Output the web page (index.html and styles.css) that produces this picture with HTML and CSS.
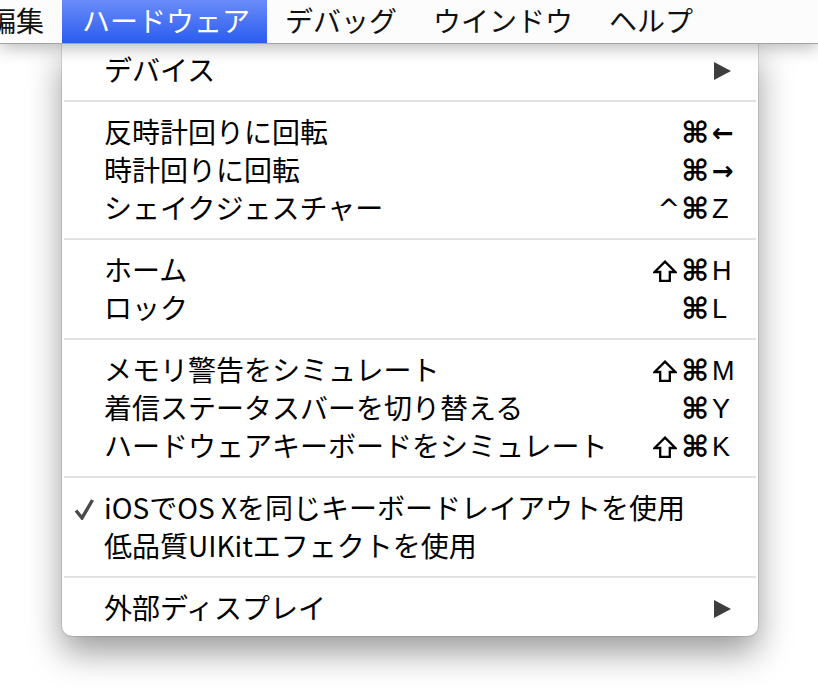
FILE: index.html
```html
<!DOCTYPE html>
<html lang="ja">
<head>
<meta charset="utf-8">
<title>ハードウェア</title>
<link rel="stylesheet" href="styles.css">
</head>
<body>
<div class="screen">
  <nav class="menubar">
    <span class="mb-item mb-first">編集</span>
    <span class="mb-item active">ハードウェア</span>
    <span class="mb-item">デバッグ</span>
    <span class="mb-item">ウインドウ</span>
    <span class="mb-item">ヘルプ</span>
  </nav>
  <div class="menu">
    <div class="mi"><span class="check"></span><span class="label">デバイス</span><span class="mods"></span><span class="key"><span class="tri"></span></span></div>
    <div class="sep"></div>
    <div class="mi"><span class="check"></span><span class="label">反時計回りに回転</span><span class="mods"><span class="cmd">⌘</span></span><span class="key arrow">←</span></div>
    <div class="mi"><span class="check"></span><span class="label">時計回りに回転</span><span class="mods"><span class="cmd">⌘</span></span><span class="key arrow">→</span></div>
    <div class="mi"><span class="check"></span><span class="label">シェイクジェスチャー</span><span class="mods"><span class="ctrl">^</span><span class="cmd">⌘</span></span><span class="key">Z</span></div>
    <div class="sep"></div>
    <div class="mi"><span class="check"></span><span class="label">ホーム</span><span class="mods"><svg class="shift" viewBox="0 0 24 22" width="24" height="22"><path d="M12 1.6 L22.4 12 L16.8 12 L16.8 20.8 L7.2 20.8 L7.2 12 L1.6 12 Z" fill="none" stroke="#000" stroke-width="2.3" stroke-linejoin="miter"/></svg><span class="cmd">⌘</span></span><span class="key">H</span></div>
    <div class="mi"><span class="check"></span><span class="label">ロック</span><span class="mods"><span class="cmd">⌘</span></span><span class="key">L</span></div>
    <div class="sep"></div>
    <div class="mi"><span class="check"></span><span class="label">メモリ警告をシミュレート</span><span class="mods"><svg class="shift" viewBox="0 0 24 22" width="24" height="22"><path d="M12 1.6 L22.4 12 L16.8 12 L16.8 20.8 L7.2 20.8 L7.2 12 L1.6 12 Z" fill="none" stroke="#000" stroke-width="2.3" stroke-linejoin="miter"/></svg><span class="cmd">⌘</span></span><span class="key">M</span></div>
    <div class="mi"><span class="check"></span><span class="label">着信ステータスバーを切り替える</span><span class="mods"><span class="cmd">⌘</span></span><span class="key">Y</span></div>
    <div class="mi"><span class="check"></span><span class="label">ハードウェアキーボードをシミュレート</span><span class="mods"><svg class="shift" viewBox="0 0 24 22" width="24" height="22"><path d="M12 1.6 L22.4 12 L16.8 12 L16.8 20.8 L7.2 20.8 L7.2 12 L1.6 12 Z" fill="none" stroke="#000" stroke-width="2.3" stroke-linejoin="miter"/></svg><span class="cmd">⌘</span></span><span class="key">K</span></div>
    <div class="sep"></div>
    <div class="mi"><span class="check"><svg class="checkmark" viewBox="0 0 20 22" width="20" height="22"><path d="M2 12.5 L8 20 L18.5 2" fill="none" stroke="#4a4a4a" stroke-width="3.4" stroke-linejoin="miter" stroke-linecap="butt"/></svg></span><span class="label">iOSでOS Xを同じキーボードレイアウトを使用</span><span class="mods"></span><span class="key"></span></div>
    <div class="mi"><span class="check"></span><span class="label">低品質UIKitエフェクトを使用</span><span class="mods"></span><span class="key"></span></div>
    <div class="sep"></div>
    <div class="mi"><span class="check"></span><span class="label">外部ディスプレイ</span><span class="mods"></span><span class="key"><span class="tri"></span></span></div>
  </div>
</div>
</body>
</html>
```

FILE: styles.css
```css
html, body {
  margin: 0;
  padding: 0;
  background: #ffffff;
}

.screen {
  position: relative;
  width: 818px;
  height: 696px;
  overflow: hidden;
  font-family: "Noto Sans CJK JP", "Noto Sans", sans-serif;
  color: #000;
}

.menubar {
  position: relative;
  z-index: 3;
  display: flex;
  align-items: stretch;
  height: 43px;
  border-bottom: 1px solid #a3a3a3;
  background: #fcfcfc;
  box-shadow: 0 3px 18px rgba(0, 0, 0, 0.3);
  font-size: 28px;
  line-height: 41px;
  white-space: nowrap;
}

.mb-item {
  padding: 0 18px;
  color: #111;
}

.mb-first {
  margin-left: -30px;
}

.mb-item.active {
  padding: 0 17px 0 20px;
  color: #fff;
  background: linear-gradient(#6a8cf8, #2a5cf0);
}

.menu {
  position: absolute;
  z-index: 2;
  left: 62px;
  top: 44px;
  width: 696px;
  padding: 7px 0 9px;
  box-sizing: border-box;
  background: #fff;
  border-radius: 0 0 10px 10px;
  box-shadow: 0 0 0 1px rgba(0, 0, 0, 0.1), 0 16px 34px rgba(0, 0, 0, 0.4);
  font-size: 28px;
}

.mi {
  display: grid;
  grid-template-columns: 42px 1fr 70px 26px;
  align-items: center;
  height: 38px;
  padding-right: 20px;
  line-height: 36px;
  white-space: nowrap;
}

.check {
  display: flex;
  align-items: center;
  justify-content: center;
  height: 38px;
  padding-left: 2px;
}

.checkmark {
  display: block;
}

.label {
  color: #000;
  padding-bottom: 3px;
}

.mods {
  display: flex;
  align-items: center;
  justify-content: flex-end;
  gap: 2px;
  height: 38px;
  padding-right: 3px;
  font-family: "DejaVu Sans", sans-serif;
}

.cmd {
  font-size: 30px;
  font-weight: bold;
  line-height: 38px;
}

.ctrl {
  font-size: 27px;
  line-height: 38px;
  margin-right: -1px;
}

.shift {
  display: block;
  margin-right: 2px;
}

.key {
  display: flex;
  align-items: center;
  height: 38px;
  font-family: "Liberation Sans", sans-serif;
  font-size: 27px;
}

.key.arrow {
  font-family: "DejaVu Sans", sans-serif;
  font-weight: bold;
  font-size: 26px;
}

.tri {
  display: block;
  width: 0;
  height: 0;
  margin-left: 2px;
  border-left: 17px solid #3e3e3e;
  border-top: 9.5px solid transparent;
  border-bottom: 9.5px solid transparent;
}

.sep {
  height: 2px;
  margin: 11px 2px;
  background: #e2e2e2;
}
```
